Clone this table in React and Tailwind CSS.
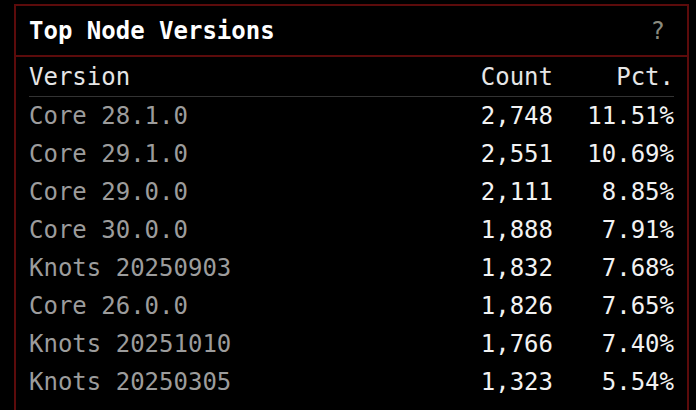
import React from "react";

const rows = [
  ["Core 28.1.0", "2,748", "11.51%"],
  ["Core 29.1.0", "2,551", "10.69%"],
  ["Core 29.0.0", "2,111", "8.85%"],
  ["Core 30.0.0", "1,888", "7.91%"],
  ["Knots 20250903", "1,832", "7.68%"],
  ["Core 26.0.0", "1,826", "7.65%"],
  ["Knots 20251010", "1,766", "7.40%"],
  ["Knots 20250305", "1,323", "5.54%"],
];

const App = () => {
  return (
    <div className="min-h-screen bg-black pt-[4px] pl-[14px] font-['DejaVu_Sans_Mono',monospace] text-[24px]">
      <div className="w-[675px] border-2 border-[#5c0b0b]">
        {/* title */}
        <div className="h-[51px] flex items-center justify-between pl-[13px] pr-[22px] border-b-2 border-[#5c0b0b]">
          <h2 className="font-bold text-white">Top Node Versions</h2>
          <span className="text-[#8a8a7e]">?</span>
        </div>
        <div className="px-[13px] pb-[24px]">
          <div className="grid grid-cols-[1fr_auto_121px] h-[40px] items-center border-b border-[#333] text-[#e6e6e6]">
            <span>Version</span>
            <span className="text-right">Count</span>
            <span className="text-right">Pct.</span>
          </div>
          {rows.map(([name, count, pct]) => (
            <div
              key={name}
              className="grid grid-cols-[1fr_auto_121px] h-[38px] items-center"
            >
              <span className="text-[#9c9c9c]">{name}</span>
              <span className="text-right text-[#f2f2f2]">{count}</span>
              <span className="text-right text-[#f2f2f2]">{pct}</span>
            </div>
          ))}
        </div>
      </div>
    </div>
  );
};

export default App;
